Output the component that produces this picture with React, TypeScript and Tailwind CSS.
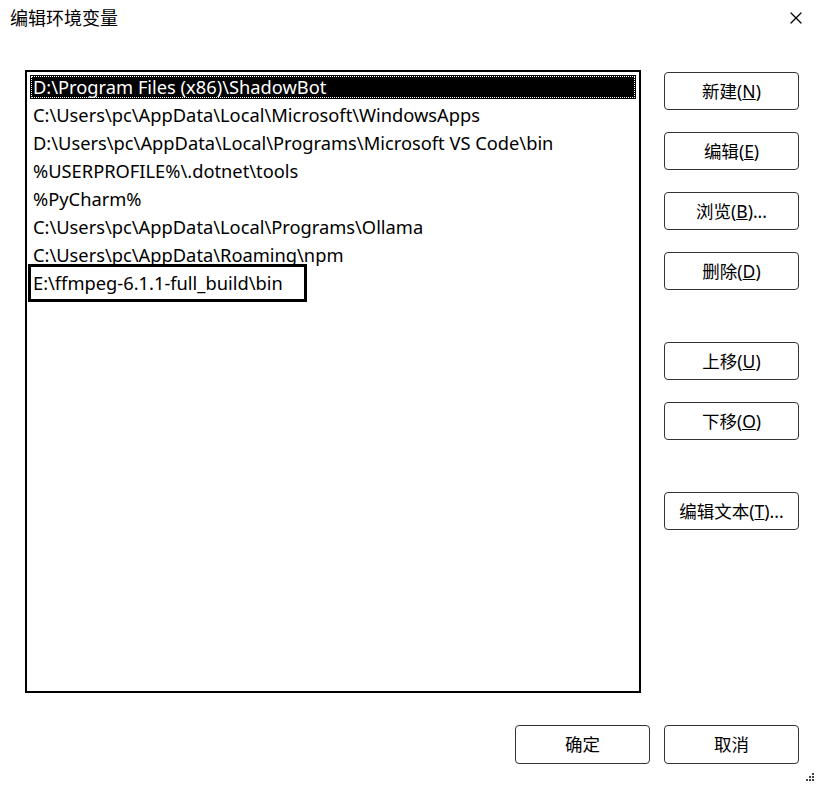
import { X } from 'lucide-react';
import clsx from 'clsx';

const PATHS = [
  'D:\\Program Files (x86)\\ShadowBot',
  'C:\\Users\\pc\\AppData\\Local\\Microsoft\\WindowsApps',
  'D:\\Users\\pc\\AppData\\Local\\Programs\\Microsoft VS Code\\bin',
  '%USERPROFILE%\\.dotnet\\tools',
  '%PyCharm%',
  'C:\\Users\\pc\\AppData\\Local\\Programs\\Ollama',
  'C:\\Users\\pc\\AppData\\Roaming\\npm',
  'E:\\ffmpeg-6.1.1-full_build\\bin',
];

const FONT = "font-['Noto_Sans','Noto_Sans_CJK_SC',sans-serif]";

function Btn({ label, hot, tail, className }: { label: string; hot?: string; tail?: string; className?: string }) {
  return (
    <button
      className={clsx(
        'w-[135px] h-[38px] border border-[#333] rounded-[4px] bg-white text-[17.5px] text-black flex items-center justify-center',
        className
      )}
    >
      {label}
      {hot && (
        <>
          (<u>{hot}</u>)
        </>
      )}
      {tail}
    </button>
  );
}

export default function App() {
  return (
    <div className={clsx('w-[819px] h-[786px] bg-white relative text-black overflow-hidden', FONT)}>
      {/* Title bar */}
      <div className="h-[36px] flex items-center justify-between pl-[10px] pr-[13px]">
        <span className="text-[18px]">编辑环境变量</span>
        <X size={20} strokeWidth={1.5} />
      </div>

      <div className="flex pl-[25px] pt-[34px]">
        {/* Path list */}
        <div className="w-[616px] h-[623px] border-2 border-black pt-[1px] px-[3px]">
          {PATHS.map((p, i) => (
            <div key={p} className="h-[28px] relative flex items-center text-[18.3px] whitespace-nowrap">
              {i === 0 ? (
                <div className="w-full h-[24px] bg-black text-white pl-[3px] flex items-center outline-1 outline-dotted outline-white -outline-offset-2">
                  {p}
                </div>
              ) : (
                <span className="pl-[3px]">{p}</span>
              )}
              {i === PATHS.length - 1 && (
                <div className="absolute left-[-2px] top-[-5px] w-[279px] h-[38px] border-[3px] border-black" />
              )}
            </div>
          ))}
        </div>

        {/* Side buttons */}
        <div className="ml-[23px] pt-[2px] flex flex-col">
          <Btn label="新建" hot="N" />
          <Btn label="编辑" hot="E" className="mt-[22px]" />
          <Btn label="浏览" hot="B" tail="..." className="mt-[22px]" />
          <Btn label="删除" hot="D" className="mt-[22px]" />
          <Btn label="上移" hot="U" className="mt-[52px]" />
          <Btn label="下移" hot="O" className="mt-[22px]" />
          <Btn label="编辑文本" hot="T" tail="..." className="mt-[52px]" />
        </div>
      </div>

      {/* Footer */}
      <div className="flex justify-end gap-[14px] pr-[20px] pt-[32px]">
        <Btn label="确定" className="h-[39px]" />
        <Btn label="取消" className="h-[39px]" />
      </div>

      {/* Resize grip */}
      <svg className="absolute right-[4px] bottom-[4px]" width="10" height="10" viewBox="0 0 10 10">
        <rect x="7" y="1" width="2" height="2" fill="#444" />
        <rect x="4" y="4" width="2" height="2" fill="#444" />
        <rect x="7" y="4" width="2" height="2" fill="#444" />
        <rect x="1" y="7" width="2" height="2" fill="#444" />
        <rect x="4" y="7" width="2" height="2" fill="#444" />
        <rect x="7" y="7" width="2" height="2" fill="#444" />
      </svg>
    </div>
  );
}
